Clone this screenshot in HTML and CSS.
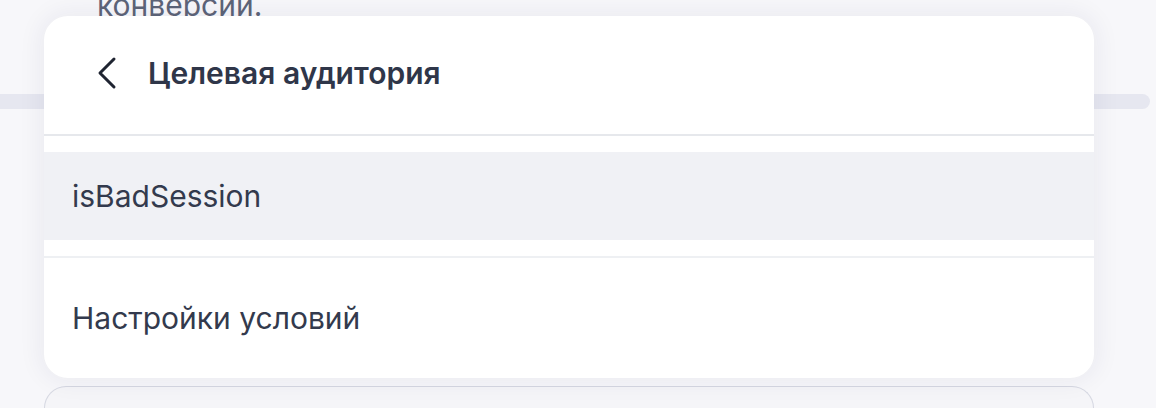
FILE: index.html
```html
<!DOCTYPE html>
<html lang="ru">
<head>
<meta charset="utf-8">
<link rel="stylesheet" href="styles.css">
</head>
<body>
<div class="page">
  <p class="bg-text">конверсии.</p>
  <div class="bg-band"></div>
  <div class="bg-card"></div>

  <div class="popup">
    <div class="popup-header">
      <button class="back" aria-label="Назад">
        <svg width="24" height="34" viewBox="0 0 24 34"><path d="M18 3 L4 17 L18 31" fill="none" stroke="#1f2431" stroke-width="3" stroke-linecap="round" stroke-linejoin="round"/></svg>
      </button>
      <h2 class="title">Целевая аудитория</h2>
    </div>
    <div class="section">
      <div class="item item-active">isBadSession</div>
    </div>
    <div class="section">
      <div class="item">Настройки условий</div>
    </div>
  </div>
</div>
</body>
</html>
```

FILE: styles.css
```css
* { box-sizing: border-box; }
html, body { margin: 0; padding: 0; }
body {
  width: 1156px;
  height: 408px;
  overflow: hidden;
  background: #f7f7fa;
  font-family: Inter, "Noto Sans", sans-serif;
  color: #333a4d;
}
.page {
  position: relative;
  width: 1156px;
  height: 408px;
  display: flex;
  flex-direction: column;
  overflow: hidden;
}
.page > * { flex-shrink: 0; }
.bg-text {
  margin: -13px 0 0 97px;
  font-size: 30px;
  line-height: 36px;
  color: #5d6478;
}
.bg-band {
  margin-top: 71px;
  height: 15px;
  width: 1150px;
  background: #e6e7f0;
  border-radius: 0 12px 12px 0;
}
.bg-card {
  margin: 277px 0 0 44px;
  width: 1050px;
  height: 22px;
  border: 1px solid #d6d8e2;
  border-bottom: 0;
  border-radius: 24px 24px 0 0;
  background: #f5f5f8;
}
.popup {
  position: absolute;
  left: 44px;
  top: 16px;
  width: 1050px;
  height: 362px;
  background: #fff;
  border-radius: 24px;
  box-shadow: 0 0 24px 4px rgba(30, 35, 80, 0.06);
  overflow: hidden;
  display: flex;
  flex-direction: column;
}
.popup-header {
  height: 120px;
  flex-shrink: 0;
  border-bottom: 2px solid #e6e8ec;
  display: flex;
  align-items: center;
  padding-left: 52px;
  padding-bottom: 4px;
}
.back {
  border: 0;
  background: none;
  padding: 0;
  width: 24px;
  height: 34px;
  display: flex;
  margin-right: 28px;
}
.title {
  margin: 0;
  font-size: 30px;
  font-weight: 600;
  color: #2f3649;
}
.section {
  padding: 16px 0;
  flex-shrink: 0;
}
.section + .section {
  border-top: 2px solid #eef0f3;
}
.item {
  height: 88px;
  display: flex;
  align-items: center;
  padding-left: 28px;
  font-size: 30px;
  color: #333a4d;
}
.item-active {
  background: #f0f1f5;
}
```
